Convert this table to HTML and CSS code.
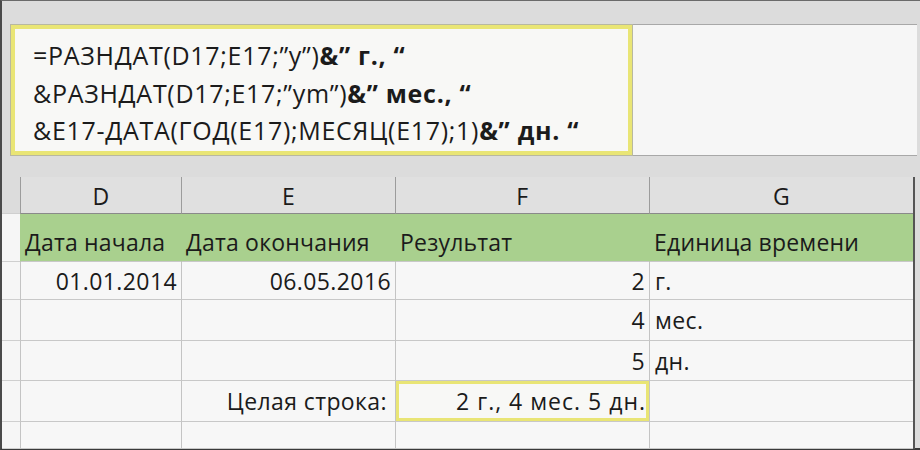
FILE: index.html
```html
<!DOCTYPE html>
<html lang="ru">
<head>
<meta charset="utf-8">
<link rel="stylesheet" href="styles.css">
</head>
<body>
<div class="screen">
  <div class="formula-area">
    <div class="formula-box">
      <p>=РАЗНДАТ(D17;E17;”y”)<b>&amp;” г., “</b></p>
      <p>&amp;РАЗНДАТ(D17;E17;”ym”)<b>&amp;” мес., “</b></p>
      <p>&amp;E17-ДАТА(ГОД(E17);МЕСЯЦ(E17);1)<b>&amp;” дн. “</b></p>
    </div>
    <div class="formula-rest"></div>
  </div>
  <div class="sheet">
    <div class="ch rh"></div>
    <div class="ch">D</div>
    <div class="ch">E</div>
    <div class="ch">F</div>
    <div class="ch">G</div>

    <div class="rh"></div>
    <div class="c head">Дата начала</div>
    <div class="c head">Дата окончания</div>
    <div class="c head">Результат</div>
    <div class="c head">Единица времени</div>

    <div class="rh"></div>
    <div class="c num">01.01.2014</div>
    <div class="c num">06.05.2016</div>
    <div class="c num">2</div>
    <div class="c">г.</div>

    <div class="rh"></div>
    <div class="c"></div>
    <div class="c"></div>
    <div class="c num">4</div>
    <div class="c">мес.</div>

    <div class="rh"></div>
    <div class="c"></div>
    <div class="c"></div>
    <div class="c num">5</div>
    <div class="c">дн.</div>

    <div class="rh"></div>
    <div class="c"></div>
    <div class="c num label">Целая строка:</div>
    <div class="c num sel">2 г., 4 мес. 5 дн.</div>
    <div class="c"></div>

    <div class="rh"></div>
    <div class="c"></div>
    <div class="c"></div>
    <div class="c"></div>
    <div class="c"></div>
  </div>
</div>
</body>
</html>
```

FILE: styles.css
```css
* { box-sizing: border-box; }
html, body { margin: 0; padding: 0; }
body {
  width: 920px;
  height: 450px;
  overflow: hidden;
  background: #dcdcdc;
  font-family: "Open Sans", "Noto Sans", sans-serif;
  color: #1b1b1b;
}
.screen {
  width: 920px;
  height: 450px;
  border-left: 2px solid #4a4a4a;
  border-top: 1px solid #6a6a6a;
  border-bottom: 2px solid #3a3a3a;
  background: #dcdcdc;
}
.formula-area {
  height: 176px;
  padding-top: 23px;
  padding-left: 8px;
  display: flex;
  align-items: flex-start;
}
.formula-box {
  width: 623px;
  height: 132px;
  border: 1px solid #b8b8a0;
  box-shadow: inset 0 0 0 4px #e9e575;
  background: #f8f8f6;
  padding: 12px 0 0 22px;
  font-size: 25px;
  letter-spacing: 0.7px;
}
.formula-box p {
  margin: 0;
  height: 37.5px;
  line-height: 37.5px;
  white-space: nowrap;
}
.formula-box b { font-weight: 700; }
.formula-rest {
  flex: 1;
  height: 132px;
  margin-right: 3px;
  background: #f6f6f6;
  border-top: 1px solid #a8a8a8;
  border-bottom: 1px solid #a8a8a8;
}
.sheet {
  display: grid;
  width: 913px;
  grid-template-columns: 18px 161px 214px 254px 264px;
  grid-template-rows: 37px 48px 38px 41px 40px 41px 27px;
  border-right: 2px solid #555;
  font-size: 23px;
  letter-spacing: 0.4px;
}
.ch {
  background: #e0e0e0;
  border-left: 1px solid #9c9c9c;
  border-bottom: 1px solid #8a8a8a;
  display: flex;
  align-items: center;
  justify-content: center;
  padding-top: 2px;
}
.ch.rh { border-left: none; background: #dcdcdc; }
.rh {
  background: #f6f6f6;
  border-bottom: 1px solid #cfcfcf;
}
.c {
  background: #f7f7f7;
  border-left: 1px solid #c4c4c4;
  border-bottom: 1px solid #c8c8c8;
  display: flex;
  align-items: center;
  padding: 0 5px;
  white-space: nowrap;
  overflow: visible;
}
.c.head {
  background: #a9d08e;
  border-left-color: #a9d08e;
  border-bottom-color: #c8c8c8;
  padding-top: 8px;
  padding-left: 4px;
  letter-spacing: 0.2px;
}
.c.num { justify-content: flex-end; padding-right: 4px; }
.c.label { padding-right: 8px; }
.c.sel {
  box-shadow: inset 0 0 0 3px #e9e575;
  background: #f8f8f6;
  padding-right: 3px;
  letter-spacing: 1px;
}
```
